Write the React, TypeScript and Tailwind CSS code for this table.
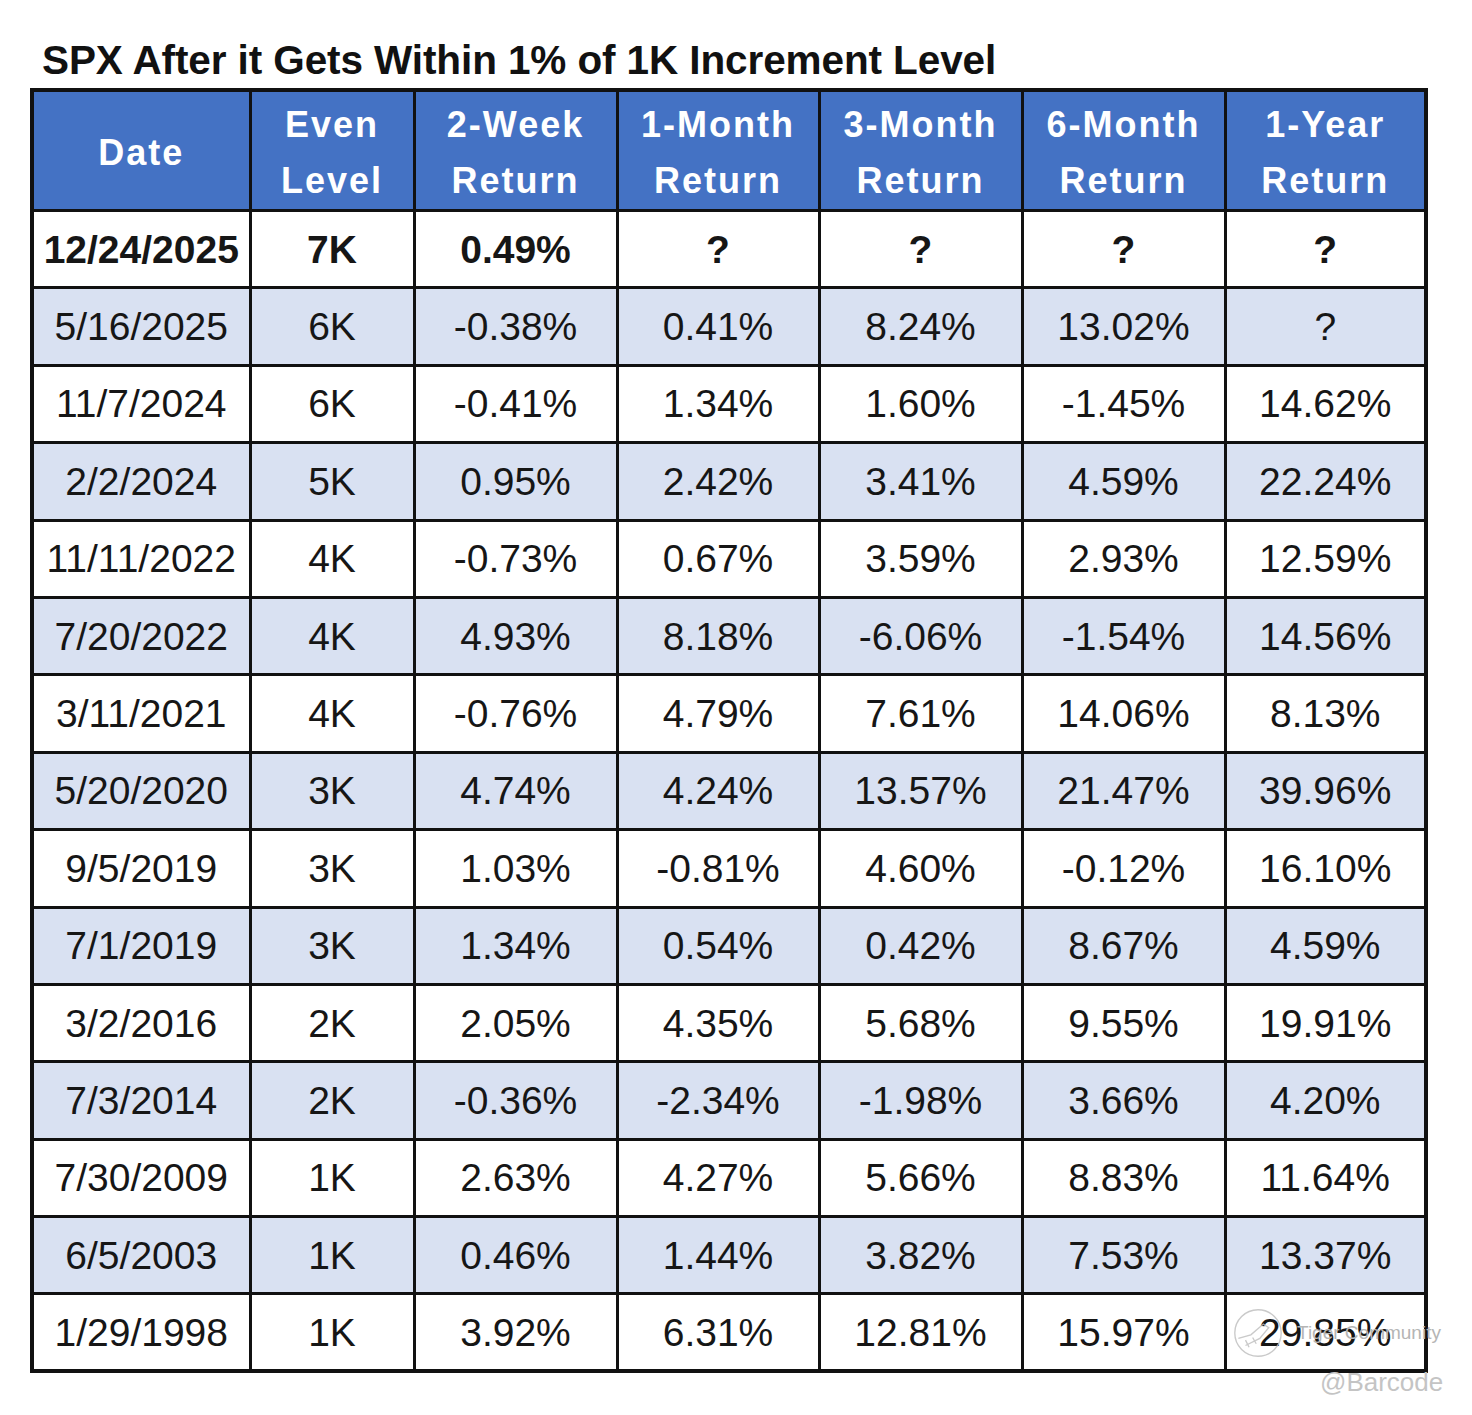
// SPX table — returns after SPX gets within 1% of a 1K level

import React from 'react';

const rows: string[][] = [
  ['12/24/2025', '7K', '0.49%', '?', '?', '?', '?'],
  ['5/16/2025', '6K', '-0.38%', '0.41%', '8.24%', '13.02%', '?'],
  ['11/7/2024', '6K', '-0.41%', '1.34%', '1.60%', '-1.45%', '14.62%'],
  ['2/2/2024', '5K', '0.95%', '2.42%', '3.41%', '4.59%', '22.24%'],
  ['11/11/2022', '4K', '-0.73%', '0.67%', '3.59%', '2.93%', '12.59%'],
  ['7/20/2022', '4K', '4.93%', '8.18%', '-6.06%', '-1.54%', '14.56%'],
  ['3/11/2021', '4K', '-0.76%', '4.79%', '7.61%', '14.06%', '8.13%'],
  ['5/20/2020', '3K', '4.74%', '4.24%', '13.57%', '21.47%', '39.96%'],
  ['9/5/2019', '3K', '1.03%', '-0.81%', '4.60%', '-0.12%', '16.10%'],
  ['7/1/2019', '3K', '1.34%', '0.54%', '0.42%', '8.67%', '4.59%'],
  ['3/2/2016', '2K', '2.05%', '4.35%', '5.68%', '9.55%', '19.91%'],
  ['7/3/2014', '2K', '-0.36%', '-2.34%', '-1.98%', '3.66%', '4.20%'],
  ['7/30/2009', '1K', '2.63%', '4.27%', '5.66%', '8.83%', '11.64%'],
  ['6/5/2003', '1K', '0.46%', '1.44%', '3.82%', '7.53%', '13.37%'],
  ['1/29/1998', '1K', '3.92%', '6.31%', '12.81%', '15.97%', '29.85%'],
];

const headers: [string, string][] = [
  ['Date', ''],
  ['Even', 'Level'],
  ['2-Week', 'Return'],
  ['1-Month', 'Return'],
  ['3-Month', 'Return'],
  ['6-Month', 'Return'],
  ['1-Year', 'Return'],
];

const widths = [218, 164, 203, 202, 203, 203, 201];

const App: React.FC = () => {
  return (
    <div className="relative w-[1472px] h-[1415px] bg-white font-['Liberation_Sans',Arial,sans-serif]">
      <div className="pl-[30px] pt-[36px]">
        <h1 className="pl-[12px] text-[40.5px] leading-[48px] font-bold text-[#111] tracking-[-0.1px]">
          SPX After it Gets Within 1% of 1K Increment Level
        </h1>

        <table className="mt-[4px] w-[1394px] table-fixed border-collapse border-[4px] border-[#111]">
          <colgroup>
            {widths.map((w, i) => (
              <col key={i} style={{ width: w }} />
            ))}
          </colgroup>
          <thead>
            <tr className="h-[119px] bg-[#4472c4]">
              {headers.map(([a, b]) => (
                <th
                  key={a}
                  className="border-[3px] border-[#111] p-0 pt-[5px] text-center align-middle text-white font-bold text-[36px] tracking-[2px] leading-[56px]"
                >
                  {b ? (
                    <>
                      <div>{a}</div>
                      <div>{b}</div>
                    </>
                  ) : (
                    a
                  )}
                </th>
              ))}
            </tr>
          </thead>
          <tbody>
            {rows.map((r, i) => (
              <tr
                key={r[0]}
                className={`h-[77.4px] ${i % 2 === 1 ? 'bg-[#d9e1f2]' : 'bg-white'}`}
              >
                {r.map((c, j) => (
                  <td
                    key={j}
                    className={`border-[3px] border-[#111] text-center align-middle text-[39px] leading-none text-[#161616] ${
                      i === 0 ? 'font-bold' : ''
                    }`}
                  >
                    {c}
                  </td>
                ))}
              </tr>
            ))}
          </tbody>
        </table>
      </div>

      {/* watermark */}
      <div className="absolute left-[1233px] top-[1308px] opacity-80">
        <svg width="50" height="50" viewBox="0 0 56 56" fill="none" stroke="#bdbdbd" strokeWidth="1.5">
          <circle cx="28" cy="28" r="26" />
          <path d="M6 34 L20 30 L34 18 L40 22 L30 34 L14 42" />
          <path d="M14 36 L18 44 M22 33 L26 40" />
        </svg>
      </div>
      <div className="absolute left-[1297px] top-[1321px] text-[19px] leading-[24px] text-[#b5b5b5]">
        Tiger Community
      </div>
      <div className="absolute left-[1320px] top-[1367px] text-[26px] leading-[30px] text-[#c4c4c4]">
        @Barcode
      </div>
    </div>
  );
};

export default App;
